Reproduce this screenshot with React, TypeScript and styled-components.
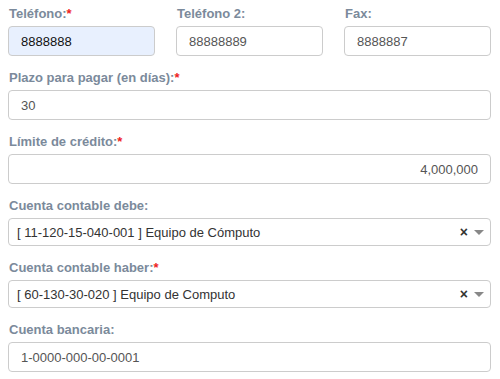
import React from "react";
import styled, { createGlobalStyle } from "styled-components";

const GlobalStyle = createGlobalStyle`
  * { box-sizing: border-box; }
  body {
    margin: 0;
    background: #ffffff;
    font-family: "Liberation Sans", Arial, sans-serif;
  }
`;

const Form = styled.div`
  display: flex;
  flex-direction: column;
  gap: 14px;
  width: 500px;
  padding: 6px 9px 0 8px;
`;

const Row = styled.div`
  display: grid;
  grid-template-columns: repeat(3, 1fr);
  column-gap: 21px;
`;

const Field = styled.div`
  display: flex;
  flex-direction: column;
  gap: 5px;
`;

const Label = styled.label`
  font-size: 13px;
  font-weight: bold;
  color: #7b8a9b;
  line-height: 15px;
  padding-left: 1px;
`;

const Required = styled.span`
  color: #ee2222;
`;

const Input = styled.input<{ $autofill?: boolean; $right?: boolean }>`
  height: 30px;
  width: 100%;
  border: 1px solid #cccccc;
  border-radius: 4px;
  padding: 0 12px;
  font-family: "Liberation Sans", Arial, sans-serif;
  font-size: 13px;
  color: ${(p) => (p.$autofill ? "#111111" : "#555555")};
  background: ${(p) => (p.$autofill ? "#e8f0fe" : "#ffffff")};
  text-align: ${(p) => (p.$right ? "right" : "left")};
  outline: none;
`;

const Select = styled.div`
  height: 28px;
  border: 1px solid #cccccc;
  border-radius: 4px;
  display: flex;
  align-items: center;
  padding: 0 6px 0 8px;
  background: #ffffff;
`;

const SelectText = styled.span`
  flex: 1;
  font-size: 13px;
  color: #333333;
`;

const Clear = styled.span`
  font-size: 14px;
  font-weight: bold;
  color: #333333;
  margin-right: 6px;
  line-height: 1;
`;

const Caret = styled.span`
  width: 0;
  height: 0;
  border-left: 5px solid transparent;
  border-right: 5px solid transparent;
  border-top: 5px solid #888888;
`;

const TextField = ({
  label,
  required,
  value,
  autofill,
  right,
}: {
  label: string;
  required?: boolean;
  value: string;
  autofill?: boolean;
  right?: boolean;
}) => (
  <Field>
    <Label>
      {label}
      {required && <Required>*</Required>}
    </Label>
    <Input defaultValue={value} $autofill={autofill} $right={right} />
  </Field>
);

const SelectField = ({
  label,
  required,
  value,
}: {
  label: string;
  required?: boolean;
  value: string;
}) => (
  <Field>
    <Label>
      {label}
      {required && <Required>*</Required>}
    </Label>
    <Select>
      <SelectText>{value}</SelectText>
      <Clear>×</Clear>
      <Caret />
    </Select>
  </Field>
);

export default function App() {
  return (
    <>
      <GlobalStyle />
      <Form>
        <Row>
          <TextField label="Teléfono:" required value="8888888" autofill />
          <TextField label="Teléfono 2:" value="88888889" />
          <TextField label="Fax:" value="8888887" />
        </Row>
        <TextField label="Plazo para pagar (en días):" required value="30" />
        <TextField label="Límite de crédito:" required value="4,000,000" right />
        <SelectField
          label="Cuenta contable debe:"
          value="[ 11-120-15-040-001 ] Equipo de Cómputo"
        />
        <SelectField
          label="Cuenta contable haber:"
          required
          value="[ 60-130-30-020 ] Equipo de Computo"
        />
        <TextField label="Cuenta bancaria:" value="1-0000-000-00-0001" />
      </Form>
    </>
  );
}
